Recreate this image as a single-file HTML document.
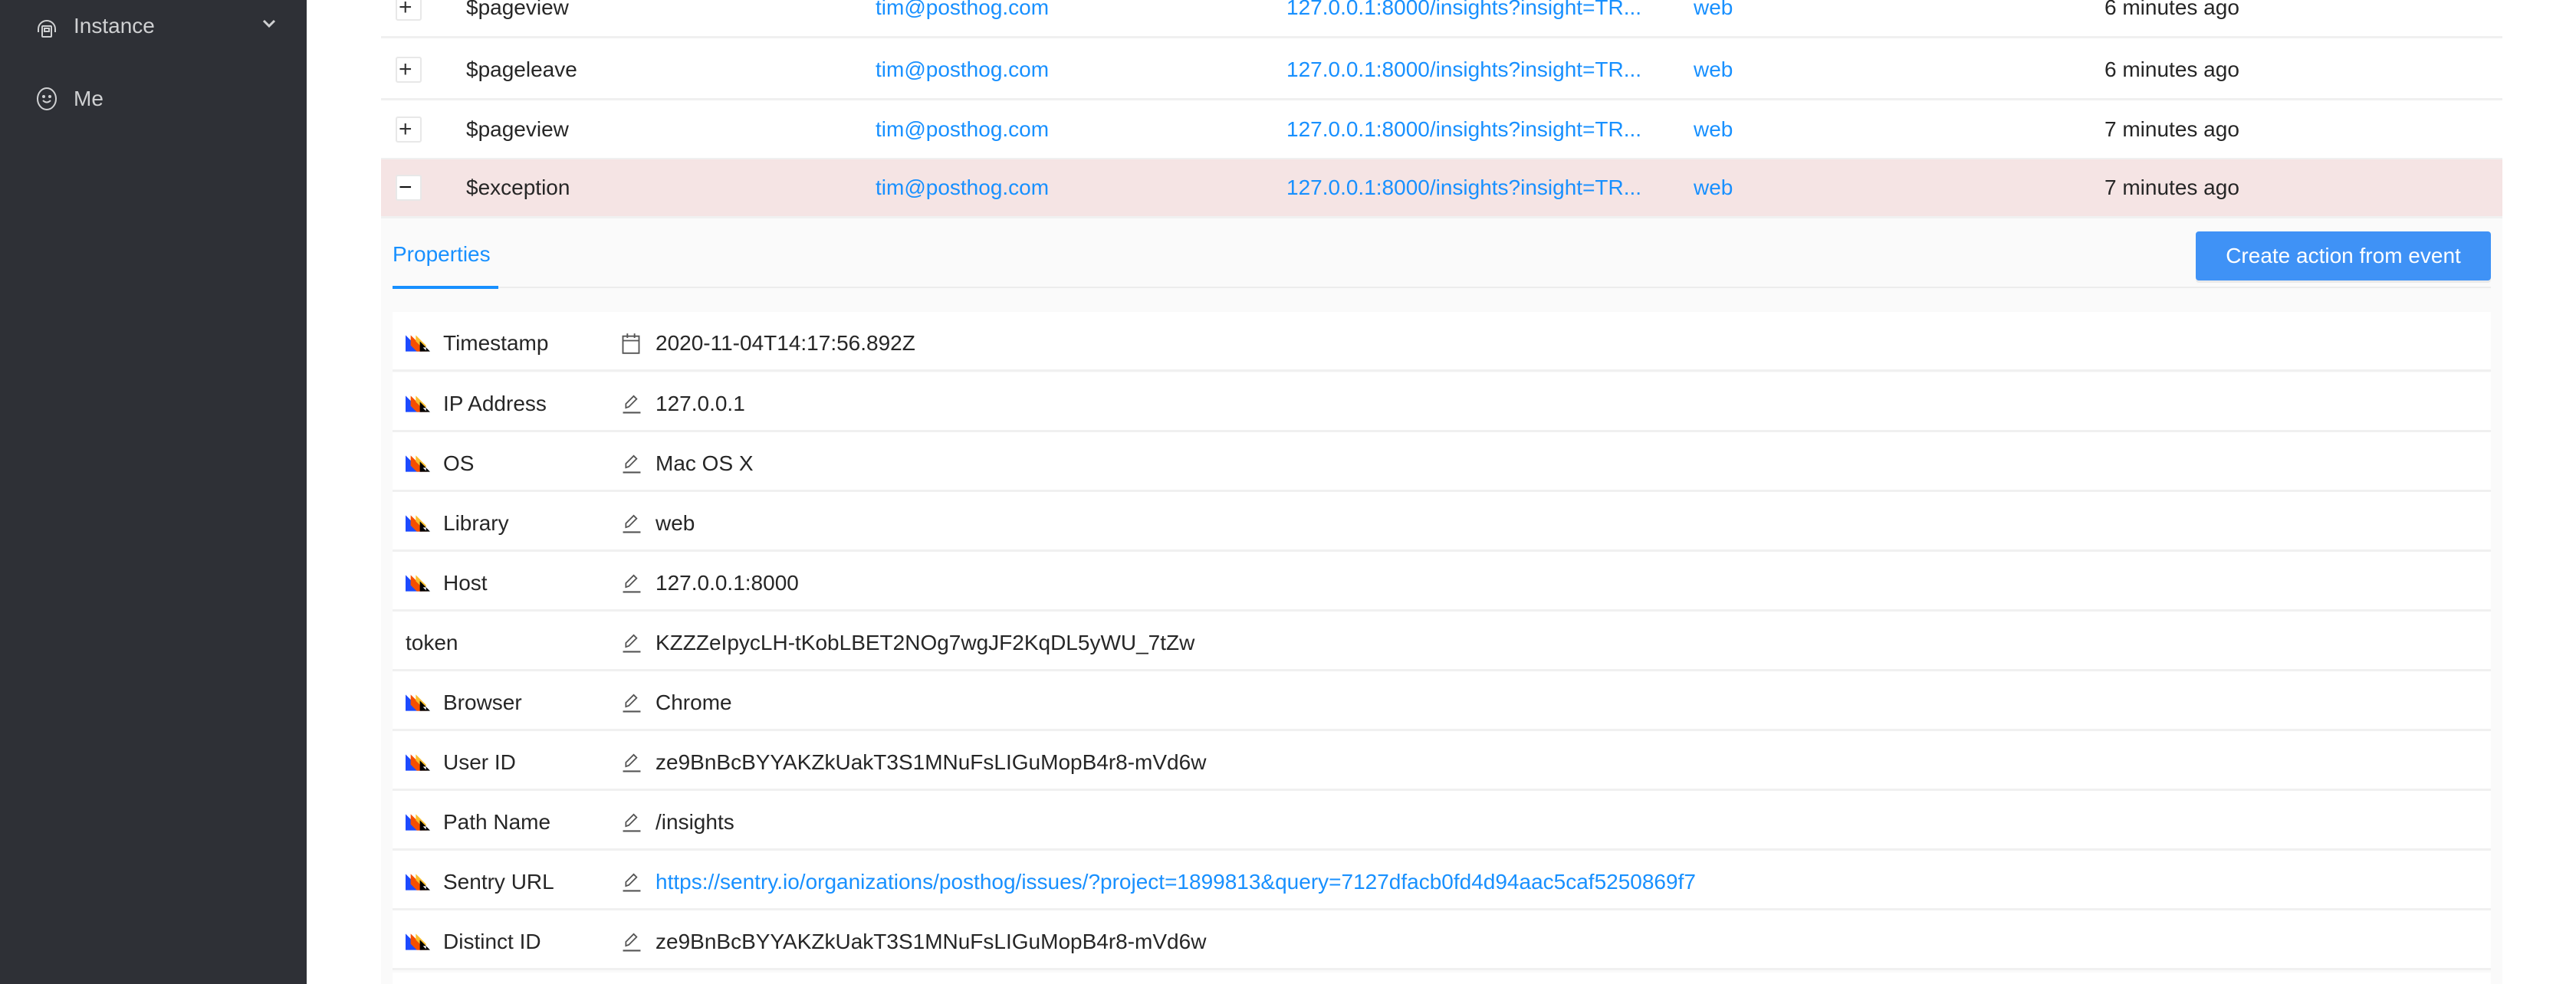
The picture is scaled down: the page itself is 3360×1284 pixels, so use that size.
<!DOCTYPE html>
<html style="overflow:hidden;width:3360px;height:1284px"><head><meta charset="utf-8"><style>
*{margin:0;padding:0;box-sizing:border-box}
html,body{overflow:hidden}
body{width:3360px;height:1284px;overflow:hidden;background:#fff;font-family:"Liberation Sans",sans-serif;font-size:28px;color:#262626;position:relative}
.abs{position:absolute}
.side{left:0;top:0;width:400px;height:1284px;background:#2e3036}
.side .t{color:#cfd0d2;font-size:28px}
.row{position:absolute;left:497px;width:2767px;height:78px;border-bottom:3px solid #f0f0f0;background:#fff}
.row span{position:absolute;top:50%;transform:translateY(-50%);white-space:nowrap}
.box{position:absolute;left:516px;width:34px;height:34px;border:2px solid #e8e8e8;border-radius:3px;background:#fff;top:50%;transform:translateY(-50%)}
.lnk{color:#1890ff}
.prow{position:absolute;left:512px;width:2737px;height:78px;background:#fff;border-bottom:3px solid #f0f0f0}
.prow span{position:absolute;top:calc(50% + 3px);transform:translateY(-50%);white-space:nowrap}
.prow svg{position:absolute;top:calc(50% + 3px);transform:translateY(-50%)}
</style></head><body>
<div class="abs side">
 <svg class="abs" style="left:46px;top:20px" width="30" height="30" viewBox="0 0 30 30" fill="none" stroke="#cfd0d2" stroke-width="2"><path d="M4 18 a11 11 0 0 1 22 0 v4 M4 18 v4"/><rect x="9" y="14" width="12" height="14" rx="1"/><rect x="12" y="17" width="6" height="4"/></svg>
 <div class="abs t" style="left:96px;top:18px">Instance</div>
 <svg class="abs" style="left:342px;top:24px" width="18" height="14" viewBox="0 0 18 14" fill="none" stroke="#cfd0d2" stroke-width="3"><path d="M2 3 l7 7 l7 -7"/></svg>
 <svg class="abs" style="left:46px;top:113px" width="30" height="32" viewBox="0 0 30 32" fill="none" stroke="#cfd0d2" stroke-width="2"><ellipse cx="15" cy="16" rx="12" ry="14"/><path d="M10 18 q5 5 10 0"/><circle cx="11" cy="13" r="1" fill="#cfd0d2"/><circle cx="19" cy="13" r="1" fill="#cfd0d2"/></svg>
 <div class="abs t" style="left:96px;top:113px">Me</div>
</div>

<div class="row" style="top:-28px"><div class="box" style="left:19px"></div><span style="left:23px;font-size:30px;line-height:1;color:#333">+</span><span style="left:111px">$pageview</span><span class="lnk" style="left:645px">tim@posthog.com</span><span class="lnk" style="left:1181px">127.0.0.1:8000/insights?insight=TR...</span><span class="lnk" style="left:1712px">web</span><span style="left:2248px">6 minutes ago</span></div>
<div class="row" style="top:53px"><div class="box" style="left:19px"></div><span style="left:23px;font-size:30px;line-height:1;color:#333">+</span><span style="left:111px">$pageleave</span><span class="lnk" style="left:645px">tim@posthog.com</span><span class="lnk" style="left:1181px">127.0.0.1:8000/insights?insight=TR...</span><span class="lnk" style="left:1712px">web</span><span style="left:2248px">6 minutes ago</span></div>
<div class="row" style="top:131px"><div class="box" style="left:19px"></div><span style="left:23px;font-size:30px;line-height:1;color:#333">+</span><span style="left:111px">$pageview</span><span class="lnk" style="left:645px">tim@posthog.com</span><span class="lnk" style="left:1181px">127.0.0.1:8000/insights?insight=TR...</span><span class="lnk" style="left:1712px">web</span><span style="left:2248px">7 minutes ago</span></div>
<div class="row" style="top:208px;background:#f5e4e4;height:77px"><div class="box" style="left:19px"></div><span style="left:23px;font-size:30px;line-height:1;color:#111">−</span><span style="left:111px">$exception</span><span class="lnk" style="left:645px">tim@posthog.com</span><span class="lnk" style="left:1181px">127.0.0.1:8000/insights?insight=TR...</span><span class="lnk" style="left:1712px">web</span><span style="left:2248px">7 minutes ago</span></div>

<div class="abs" style="left:497px;top:285px;width:2767px;height:999px;background:#fafafa"></div>
<div class="abs" style="left:512px;top:316px;color:#1890ff;font-size:28px">Properties</div>
<div class="abs" style="left:512px;top:374px;width:2737px;height:2px;background:#ececec"></div>
<div class="abs" style="left:512px;top:373px;width:138px;height:4px;background:#1890ff"></div>
<div class="abs" style="left:2864px;top:302px;width:385px;height:64px;background:#3f92f6;border-radius:4px;color:#fff;font-size:28px;line-height:64px;text-align:center;box-shadow:0 3px 0 #eaeaea">Create action from event</div>

<svg width="0" height="0" style="position:absolute"><defs>
<symbol id="ph" viewBox="0 0 24 16"><path d="M0 0 L16 16 H0Z" fill="#1d4aff"/><path d="M5 0 L21 16 H11 L5 10Z" fill="#f54e00"/><path d="M10 0 L20 10 V16 L10 6Z" fill="#f9bd2b"/><path d="M14 6 L24 16 H14Z" fill="#000"/><path d="M17 12 h3 v3Z" fill="#fff"/></symbol>
<symbol id="ed" viewBox="0 0 20 22"><path d="M4 15 L4 11 L12 3 L15 6 L7 14 Z" fill="none" stroke="#555" stroke-width="1.4"/><path d="M1 20 H19" stroke="#555" stroke-width="1.6"/></symbol>
<symbol id="cal" viewBox="0 0 20 24"><rect x="1" y="4" width="18" height="19" fill="none" stroke="#555" stroke-width="1.6"/><path d="M1 9 H19 M6 1 V6 M14 1 V6" stroke="#555" stroke-width="1.6"/></symbol>
</defs></svg>

<div class="prow" style="top:407px"><svg style="left:17px" width="32" height="22"><use href="#ph"/></svg><span style="left:66px">Timestamp</span><svg style="left:299px" width="24" height="28"><use href="#cal"/></svg><span style="left:343px">2020-11-04T14:17:56.892Z</span></div>
<div class="prow" style="top:486px"><svg style="left:17px" width="32" height="22"><use href="#ph"/></svg><span style="left:66px">IP Address</span><svg style="left:299px" width="26" height="28"><use href="#ed"/></svg><span style="left:343px">127.0.0.1</span></div>
<div class="prow" style="top:564px"><svg style="left:17px" width="32" height="22"><use href="#ph"/></svg><span style="left:66px">OS</span><svg style="left:299px" width="26" height="28"><use href="#ed"/></svg><span style="left:343px">Mac OS X</span></div>
<div class="prow" style="top:642px"><svg style="left:17px" width="32" height="22"><use href="#ph"/></svg><span style="left:66px">Library</span><svg style="left:299px" width="26" height="28"><use href="#ed"/></svg><span style="left:343px">web</span></div>
<div class="prow" style="top:720px"><svg style="left:17px" width="32" height="22"><use href="#ph"/></svg><span style="left:66px">Host</span><svg style="left:299px" width="26" height="28"><use href="#ed"/></svg><span style="left:343px">127.0.0.1:8000</span></div>
<div class="prow" style="top:798px"><span style="left:17px">token</span><svg style="left:299px" width="26" height="28"><use href="#ed"/></svg><span style="left:343px">KZZZeIpycLH-tKobLBET2NOg7wgJF2KqDL5yWU_7tZw</span></div>
<div class="prow" style="top:876px"><svg style="left:17px" width="32" height="22"><use href="#ph"/></svg><span style="left:66px">Browser</span><svg style="left:299px" width="26" height="28"><use href="#ed"/></svg><span style="left:343px">Chrome</span></div>
<div class="prow" style="top:954px"><svg style="left:17px" width="32" height="22"><use href="#ph"/></svg><span style="left:66px">User ID</span><svg style="left:299px" width="26" height="28"><use href="#ed"/></svg><span style="left:343px">ze9BnBcBYYAKZkUakT3S1MNuFsLIGuMopB4r8-mVd6w</span></div>
<div class="prow" style="top:1032px"><svg style="left:17px" width="32" height="22"><use href="#ph"/></svg><span style="left:66px">Path Name</span><svg style="left:299px" width="26" height="28"><use href="#ed"/></svg><span style="left:343px">/insights</span></div>
<div class="prow" style="top:1110px"><svg style="left:17px" width="32" height="22"><use href="#ph"/></svg><span style="left:66px">Sentry URL</span><svg style="left:299px" width="26" height="28"><use href="#ed"/></svg><span class="lnk" style="left:343px">https://sentry.io/organizations/posthog/issues/?project=1899813&amp;query=7127dfacb0fd4d94aac5caf5250869f7</span></div>
<div class="prow" style="top:1188px"><svg style="left:17px" width="32" height="22"><use href="#ph"/></svg><span style="left:66px">Distinct ID</span><svg style="left:299px" width="26" height="28"><use href="#ed"/></svg><span style="left:343px">ze9BnBcBYYAKZkUakT3S1MNuFsLIGuMopB4r8-mVd6w</span></div>
<div class="prow" style="top:1269px;height:15px;border-bottom:none"></div>
</body></html>
